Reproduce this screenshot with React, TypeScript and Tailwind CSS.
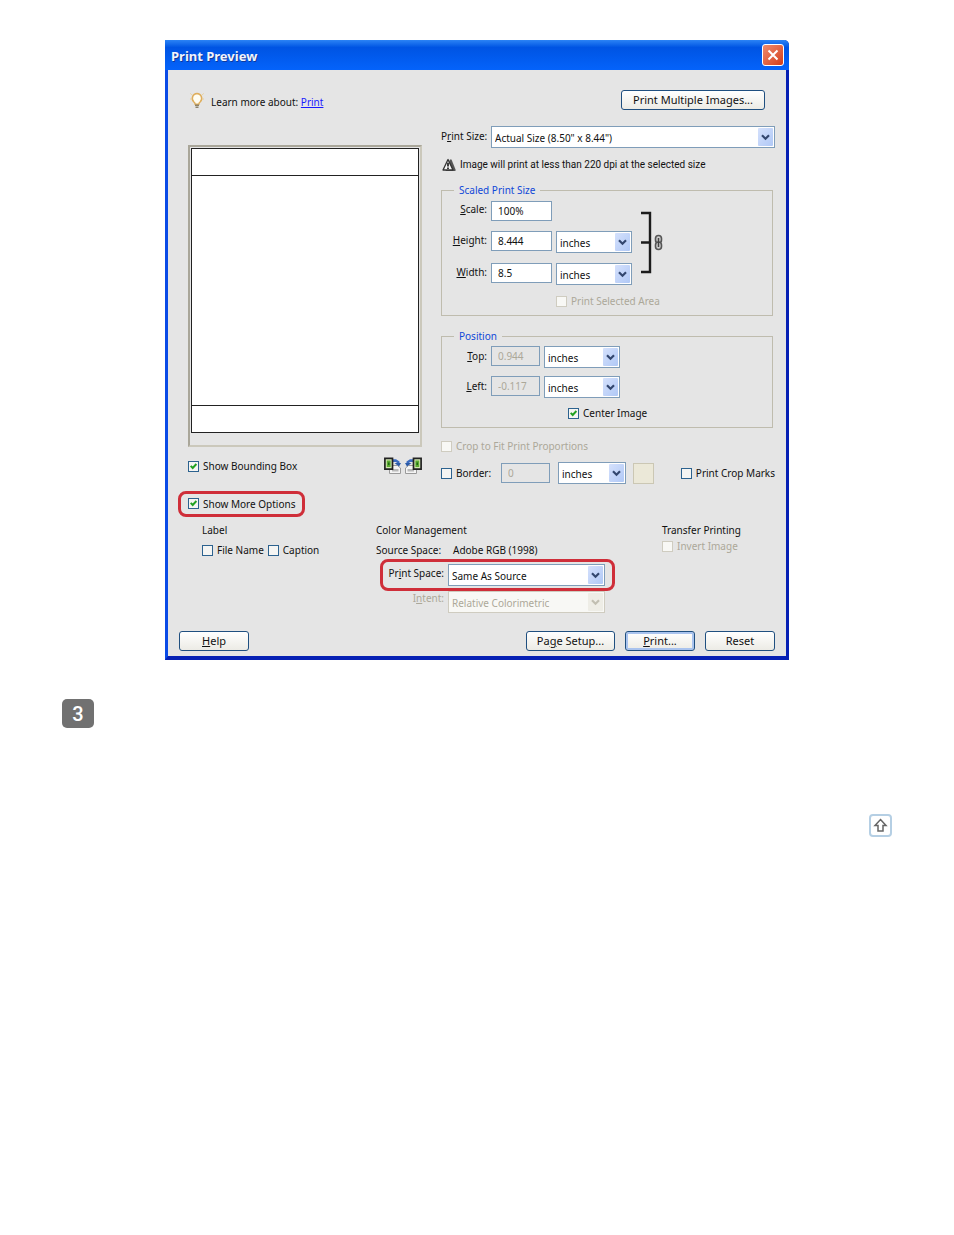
import { useState, type ReactNode } from 'react'
import { clsx } from 'clsx'

function Check({ label, checked = false, disabled = false }: { label: string; checked?: boolean; disabled?: boolean }) {
  const [on, setOn] = useState(checked)
  return (
    <label className={clsx('flex h-[14px] items-center gap-1 whitespace-nowrap', disabled && 'text-[#aca899]')}>
      <span className="relative flex">
        <input
          type="checkbox"
          checked={on}
          disabled={disabled}
          onChange={() => setOn(!on)}
          className={clsx(
            'size-[11px] appearance-none border',
            disabled ? 'border-[#cfccc0] bg-[#f8f8f5]' : 'border-[#2c628f] bg-[#f5f5f3]'
          )}
        />
        {on && (
          <svg viewBox="0 0 11 11" className="pointer-events-none absolute inset-0 size-[11px]">
            <path d="M2.7 4.8 4.7 7 8.4 3" fill="none" stroke="#21a121" strokeWidth="1.9" />
          </svg>
        )}
      </span>
      {label}
    </label>
  )
}

function Select({ id, label, value, className, disabled = false }: { id: string; label?: string; value: string; className: string; disabled?: boolean }) {
  return (
    <span className={clsx('relative flex h-[22px]', className)}>
      <select
        id={id}
        aria-label={label}
        disabled={disabled}
        className={clsx(
          'w-full appearance-none border pl-[3px] pt-[1px] opacity-100',
          disabled ? 'border-[#cfccc0] bg-[#f8f8f5] text-[#aca899]' : 'border-[#7f9db9] bg-white'
        )}
      >
        <option>{value}</option>
      </select>
      <span
        className={clsx(
          'pointer-events-none absolute inset-y-[2px] right-[2px] flex w-[15px] items-center justify-center rounded-[1px]',
          disabled ? 'bg-[#eeede6]' : 'bg-gradient-to-br from-[#d5e1fc] to-[#b0c8f6]'
        )}
      >
        <svg viewBox="0 0 9 7" className="h-[7px] w-[9px]">
          <path d="M1 1.3 4.5 4.8 8 1.3" fill="none" stroke={disabled ? '#c2bfb2' : '#33476f'} strokeWidth="2.2" />
        </svg>
      </span>
    </span>
  )
}

function Field({ id, value, className, disabled = false }: { id: string; value: string; className: string; disabled?: boolean }) {
  return (
    <input
      id={id}
      type="text"
      defaultValue={value}
      disabled={disabled}
      className={clsx(
        'h-5 border border-[#7f9db9] px-[6px]',
        disabled ? 'bg-[#e5e5e5] text-[#aca899]' : 'bg-white',
        className
      )}
    />
  )
}

function Button({ children, className, primary = false }: { children: ReactNode; className: string; primary?: boolean }) {
  return (
    <button
      type="button"
      className={clsx(
        'h-5 whitespace-nowrap rounded-[3px] border border-[#1f4f80] bg-gradient-to-b from-white to-[#ecebe5] text-[11px] leading-4',
        primary && 'shadow-[inset_0_0_0_2px_#a9c3ee]',
        className
      )}
    >
      {children}
    </button>
  )
}

function Group({ title, children }: { title: string; children: ReactNode }) {
  return (
    <fieldset className="mr-[2px] border border-[#bfbcae]">
      <legend className="ml-3 px-[5px] leading-[14px] text-[#1048d8]">{title}</legend>
      {children}
    </fieldset>
  )
}

function RotateIcon({ right = false }: { right?: boolean }) {
  return (
    <svg viewBox="0 0 17 17" className={clsx('h-[17px] w-[17px]', right && '-scale-x-100')}>
      <path d="M5.500 8.500h8l3 2.500v5.500h-11z" fill="#f4f4f4" stroke="#9a9a9a" />
      <path d="M8 12h6.500v2.500h-6.500z" fill="#b9b9b9" />
      <path d="M8.500 2.200h3.500l3.500 2.300v2.500h-3v-2h-4z" fill="#3c6cc0" />
      <path d="M10.500 6h6.500l-2 3.500z" fill="#2b5aa8" />
      <path d="M.9 1.400h7.600v10.800h-7.600z" fill="#d3e6b4" stroke="#222" strokeWidth="1.700" />
      <path d="M2.800 3.500h3.800v6.500h-3.800z" fill="#5cab2f" />
      <path d="M4 5.500h1.500v2.500h-1.500z" fill="#1e6a16" />
    </svg>
  )
}

export default function App() {
  return (
    <main className="min-h-screen bg-white pt-10 font-['Noto_Sans',sans-serif] text-[10px] leading-[14px] text-[#111]">
      {/* Dialog */}
      <section className="mx-auto w-full max-w-[624px] rounded-tr-[5px] border-x-[3px] border-b-[4px] border-b-[#0620b4] border-l-[#0a4be6] border-r-[#0620b4] bg-[#e5e5e5]">
        <header className="-mx-[3px] flex h-[30px] items-center justify-between rounded-tr-[5px] bg-gradient-to-b from-[#2b83f5] via-[#0054e3] via-25% to-[#0463fb] pl-[6px] pr-[5px]">
          <h1 className="pt-[2px] text-[13px] font-bold leading-4 text-[#f0f4fc] [text-shadow:1px_1px_#0f3a9c]">Print Preview</h1>
          <button type="button" aria-label="Close" className="flex size-[22px] items-center justify-center rounded-[3px] border border-white bg-gradient-to-br from-[#ee8a6c] to-[#d33a12]">
            <svg viewBox="0 0 12 12" className="size-3">
              <path d="M1.500 1.500l9 9M10.500 1.500l-9 9" stroke="#fff" strokeWidth="2" />
            </svg>
          </button>
        </header>

        <div className="pb-[5px] pl-[10px] pr-[11px] pt-5">
          <div className="flex h-5 items-center justify-between pl-3 pr-[10px]">
            <p className="flex items-center gap-[7px]">
              <svg viewBox="0 0 14 17" className="h-[17px] w-[14px]">
                <path d="M7 1.500a4.900 4.900 0 0 0-3.300 8.300c1 .9 1.500 1.500 1.500 2.500h3.600c0-1 .5-1.600 1.500-2.500a4.900 4.900 0 0 0-3.300-8.300z" fill="#fffdf2" stroke="#dfae5c" strokeWidth="1.500" />
                <path d="M5 13.200h4M5.500 15.200h3" stroke="#8d826a" strokeWidth="1.500" />
                <path d="M.3 1.500l1.500 1.300M13.700 1.500l-1.500 1.300M0 7h1.300M12.700 7H14" stroke="#e9cf98" />
              </svg>
              <span className="pt-1">
                Learn more about: <a href="#print" className="text-[#1a1aff] underline">Print</a>
              </span>
            </p>
            <Button className="w-36">Print Multiple Images...</Button>
          </div>

          <div className="mt-4 flex justify-between">
            {/* Preview */}
            <div className="w-[244px] pt-[19px]">
              <div className="ml-[10px] h-[302px] border-2 border-[#a9a699] border-b-[#cbc8bb] border-r-[#cbc8bb] p-[1px]">
                <div className="flex h-[285px] flex-col justify-between border border-[#222] bg-white">
                  <div className="h-[27px] border-b border-[#222]" />
                  <div className="h-[27px] border-t border-[#222]" />
                </div>
              </div>
              <div className="ml-[10px] mt-3 flex h-[14px] items-center justify-between">
                <Check label="Show Bounding Box" checked />
                <div className="flex gap-1 pb-[2px]">
                  <button type="button" aria-label="Rotate left"><RotateIcon /></button>
                  <button type="button" aria-label="Rotate right"><RotateIcon right /></button>
                </div>
              </div>
              <div className="mt-[18px] flex h-[26px] w-[127px] items-center rounded-lg border-[3px] border-[#cf2e39] pb-[1px] pl-[7px]">
                <Check label="Show More Options" checked />
              </div>
            </div>

            {/* Settings */}
            <div className="w-[334px]">
              <div className="flex gap-[5px]">
                <label htmlFor="print-size" className="w-[45px] whitespace-nowrap pt-[3px] text-right">P<u>r</u>int Size:</label>
                <Select id="print-size" value={'Actual Size (8.50" x 8.44")'} className="flex-1" />
              </div>
              <p className="mt-[10px] flex items-center gap-1 whitespace-nowrap pl-[1px] font-['Roboto',sans-serif]">
                <svg viewBox="0 0 14 14" className="size-[14px]">
                  <path d="M8 1.500h1.500l4 10v1.500h-10z" fill="#555" />
                  <path d="M6 1.500 1 12h10z" fill="#f4f4f4" stroke="#333" strokeWidth="1.300" strokeLinejoin="round" />
                  <path d="M6 4.800v3.700M6 9.500v1.500" stroke="#111" strokeWidth="1.600" />
                </svg>
                Image will print at less than 220 dpi at the selected size
              </p>

              <div className="mt-[11px]">
                <Group title="Scaled Print Size">
                  <div className="flex pt-1">
                    <div className="grid grid-cols-[45px_61px_76px] gap-x-1 gap-y-[10px]">
                      <label htmlFor="scale" className="pt-[1px] text-right"><u>S</u>cale:</label>
                      <Field id="scale" value="100%" className="w-full" />
                      <span />
                      <label htmlFor="height" className="pt-[2px] text-right"><u>H</u>eight:</label>
                      <Field id="height" value="8.444" className="w-full" />
                      <Select id="height-unit" label="Height unit" value="inches" className="w-full" />
                      <label htmlFor="width" className="pt-[2px] text-right"><u>W</u>idth:</label>
                      <Field id="width" value="8.5" className="w-full" />
                      <Select id="width-unit" label="Width unit" value="inches" className="w-full" />
                    </div>
                    <svg viewBox="0 0 24 64" className="ml-2 mt-[10px] h-16 w-6">
                      <path d="M1 2h9v59H1M1 31.500h9" fill="none" stroke="#1c1c1c" strokeWidth="2.400" />
                      <rect x="15.500" y="24.500" width="6" height="7.500" rx="3" fill="#ccc" stroke="#555" strokeWidth="1.600" />
                      <rect x="15.500" y="31" width="6" height="7.500" rx="3" fill="#ccc" stroke="#555" strokeWidth="1.600" />
                      <path d="M18.500 27v9" stroke="#444" strokeWidth="1.500" />
                    </svg>
                  </div>
                  <div className="mt-[9px] pb-[7px] pl-[114px]">
                    <Check label="Print Selected Area" disabled />
                  </div>
                </Group>
              </div>

              <div className="mt-[13px]">
                <Group title="Position">
                  <div className="grid grid-cols-[45px_49px_76px] gap-x-1 gap-y-2 pt-[3px]">
                    <label htmlFor="top" className="pt-[3px] text-right"><u>T</u>op:</label>
                    <Field id="top" value="0.944" className="w-full" disabled />
                    <Select id="top-unit" label="Top unit" value="inches" className="w-full" />
                    <label htmlFor="left" className="pt-[3px] text-right"><u>L</u>eft:</label>
                    <Field id="left" value="-0.117" className="w-full" disabled />
                    <Select id="left-unit" label="Left unit" value="inches" className="w-full" />
                  </div>
                  <div className="mt-2 pb-[7px] pl-[126px]">
                    <Check label="Center Image" checked />
                  </div>
                </Group>
              </div>

              <div className="mt-[11px]">
                <Check label="Crop to Fit Print Proportions" disabled />
              </div>
              <div className="mt-[9px] flex items-center">
                <div className="w-[60px]"><Check label="Border:" /></div>
                <input aria-label="Border width" defaultValue="0" disabled className="h-5 w-[49px] border border-[#7f9db9] px-[6px] text-[#aca899]" />
                <Select id="border-unit" label="Border unit" value="inches" className="ml-2 w-[68px]" />
                <button type="button" aria-label="Border color" className="ml-[7px] size-[21px] border border-[#cbc7b4] bg-[#ebe8d8]" />
                <div className="ml-auto"><Check label="Print Crop Marks" /></div>
              </div>
            </div>
          </div>

          {/* More options */}
          <div className="mt-[6px] grid h-[90px] grid-cols-[174px_286px_1fr] pl-6">
            <div>
              <h2>Label</h2>
              <div className="mt-[6px] flex gap-1">
                <Check label="File Name" />
                <Check label="Caption" />
              </div>
            </div>
            <div>
              <h2>Color Management</h2>
              <p className="mt-[6px] flex gap-[6px]"><span className="w-[71px] whitespace-nowrap">Source Space:</span><span>Adobe RGB (1998)</span></p>
              <div className="ml-1 mt-[2px] flex h-8 w-[235px] items-center rounded-lg border-[3px] border-[#cf2e39]">
                <label htmlFor="print-space" className="w-[61px] whitespace-nowrap pb-1 text-right">Pr<u>i</u>nt Space:</label>
                <Select id="print-space" value="Same As Source" className="ml-1 w-[157px]" />
              </div>
              <div className="ml-1 flex w-[235px] pl-[3px]">
                <label htmlFor="intent" className="w-[61px] text-right text-[#aca899]">I<u>n</u>tent:</label>
                <Select id="intent" value="Relative Colorimetric" className="ml-1 w-[157px]" disabled />
              </div>
            </div>
            <div>
              <h2>Transfer Printing</h2>
              <div className="mt-[2px]"><Check label="Invert Image" disabled /></div>
            </div>
          </div>

          <footer className="mt-[18px] flex gap-[10px] pl-[1px]">
            <Button className="w-[70px]"><u>H</u>elp</Button>
            <Button className="ml-auto w-[89px]">Pa<u>g</u>e Setup...</Button>
            <Button className="w-[70px]" primary><u>P</u>rint...</Button>
            <Button className="w-[70px]">Reset</Button>
          </footer>
        </div>
      </section>

      <div className="px-[62px]">
        <div className="mt-[39px] flex h-[29px] w-8 items-center justify-center rounded-[5px] bg-[#717171] pt-[1px] font-['Roboto',sans-serif] text-[20px] font-medium leading-6 text-white">3</div>
        <div className="mt-[86px] flex justify-end">
          <a href="#top" aria-label="Back to top" className="flex size-[23px] items-center justify-center rounded-[4px] border-2 border-[#b5cfe4] bg-white">
            <svg viewBox="0 0 15 15" className="size-[15px]">
              <path d="M7.500 1.500 13 7.500h-3v5.500h-5v-5.500h-3z" fill="#fff" stroke="#666" strokeWidth="1.500" />
            </svg>
          </a>
        </div>
      </div>
    </main>
  )
}
